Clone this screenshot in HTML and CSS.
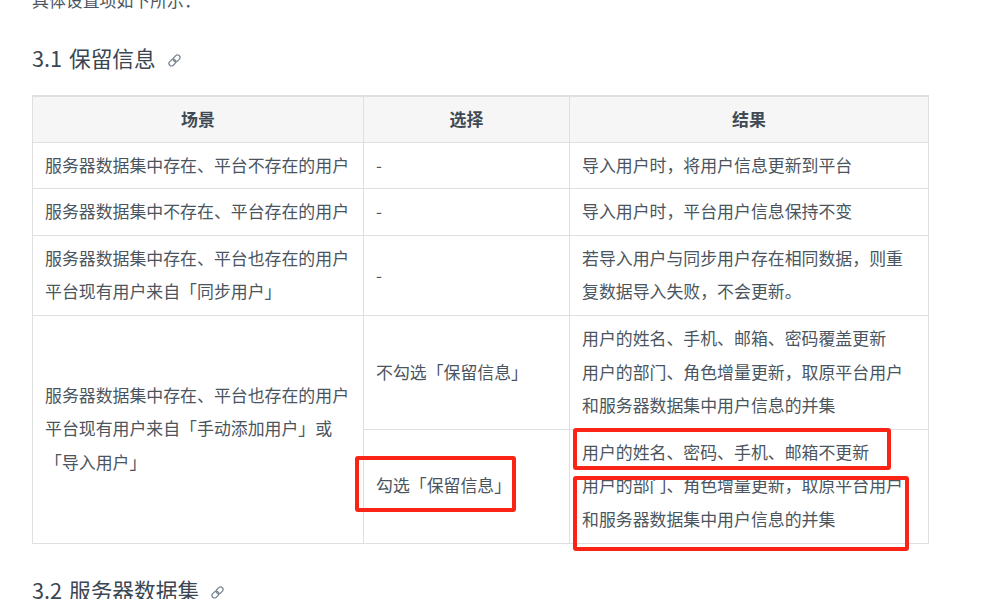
FILE: index.html
```html
<!DOCTYPE html>
<html lang="zh-CN">
<head>
<meta charset="utf-8">
<title>保留信息</title>
<link rel="stylesheet" href="styles.css">
</head>
<body>
<main class="article">
  <p class="intro">具体设置项如下所示：</p>
  <h3 class="heading">3.1 保留信息 <a class="anchor" href="#"><svg viewBox="0 0 16 16" width="15" height="15"><g fill="none" stroke="currentColor" stroke-width="1.3" transform="rotate(-45 8 8)"><rect x="0.8" y="5.3" width="8" height="5.4" rx="2.7"/><rect x="7.2" y="5.3" width="8" height="5.4" rx="2.7"/></g></svg></a></h3>
  <table class="data">
    <colgroup><col class="c1"><col class="c2"><col class="c3"></colgroup>
    <thead><tr><th>场景</th><th>选择</th><th>结果</th></tr></thead>
    <tbody>
      <tr><td>服务器数据集中存在、平台不存在的用户</td><td>-</td><td>导入用户时，将用户信息更新到平台</td></tr>
      <tr><td>服务器数据集中不存在、平台存在的用户</td><td>-</td><td>导入用户时，平台用户信息保持不变</td></tr>
      <tr><td>服务器数据集中存在、平台也存在的用户<br>平台现有用户来自「同步用户」</td><td>-</td><td>若导入用户与同步用户存在相同数据，则重复数据导入失败，不会更新。</td></tr>
      <tr><td rowspan="2">服务器数据集中存在、平台也存在的用户<br>平台现有用户来自「手动添加用户」或「导入用户」</td><td>不勾选「保留信息」</td><td>用户的姓名、手机、邮箱、密码覆盖更新<br>用户的部门、角色增量更新，取原平台用户和服务器数据集中用户信息的并集</td></tr>
      <tr><td>勾选「保留信息」</td><td>用户的姓名、密码、手机、邮箱不更新<br>用户的部门、角色增量更新，取原平台用户和服务器数据集中用户信息的并集</td></tr>
    </tbody>
  </table>
  <h3 class="heading next">3.2 服务器数据集 <a class="anchor" href="#"><svg viewBox="0 0 16 16" width="15" height="15"><g fill="none" stroke="currentColor" stroke-width="1.3" transform="rotate(-45 8 8)"><rect x="0.8" y="5.3" width="8" height="5.4" rx="2.7"/><rect x="7.2" y="5.3" width="8" height="5.4" rx="2.7"/></g></svg></a></h3>
</main>
<div class="mark mark-a"></div>
<div class="mark mark-b"></div>
<div class="mark mark-c"></div>
</body>
</html>
```
FILE: styles.css
```css
html, body { margin: 0; padding: 0; background: #fff; height: 599px; overflow: hidden; }
body { position: relative; font-family: "Noto Sans CJK SC", "Liberation Sans", sans-serif; color: #4a5560; }
.article { width: 896px; margin: -17px 0 0 32px; font-size: 16.9px; }
.intro { margin: 0; line-height: 34px; }
.heading { margin: 24px 0 0; font-size: 21.7px; font-weight: 400; line-height: 34px; color: #3a4652; word-spacing: 2px; }
.heading.next { margin-top: 29px; }
.anchor { color: #7b8794; margin-left: 4px; display: inline-block; vertical-align: -1px; line-height: 0; }
.data { width: 896px; margin-top: 20px; border-collapse: collapse; table-layout: fixed; border-top: 2px solid #dfdfdf; line-height: 33.6px; }
.c1 { width: 331px; }
.c2 { width: 206px; }
.c3 { width: 359px; }
.data th, .data td { border: 1px solid #dfdfdf; padding: 5px 12px 7px; text-align: left; font-weight: 400; }
.data th { background: #f6f6f6; text-align: center; font-weight: 700; padding: 5px 12px 6px; color: #3f4a54; }
.mark { position: absolute; box-sizing: border-box; border: 4px solid #fa2416; border-radius: 3px; }
.mark-a { left: 355px; top: 456px; width: 161px; height: 56px; }
.mark-b { left: 573px; top: 428px; width: 318px; height: 42px; }
.mark-c { left: 573px; top: 476px; width: 336px; height: 75px; }
```
